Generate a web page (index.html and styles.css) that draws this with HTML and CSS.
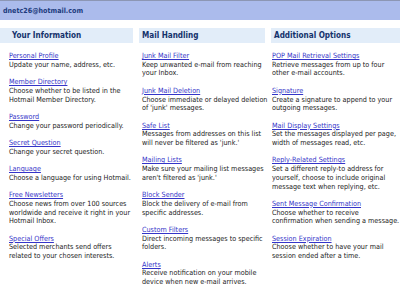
FILE: index.html
```html
<!DOCTYPE html>
<html lang="en">
<head>
	<meta charset="UTF-8">
	<title>Options</title>
	<link rel="stylesheet" href="styles.css">
</head>
<body>
	<div class="topbar">dnetc26@hotmail.com</div>
	<div class="cols">
		<div class="col col-info">
			<div class="head">Your Information</div>
			<ul class="items">
				<li><a href="#">Personal Profile</a><br>Update your name, address, etc.</li>
				<li><a href="#">Member Directory</a><br>Choose whether to be listed in the<br>Hotmail Member Directory.</li>
				<li><a href="#">Password</a><br>Change your password periodically.</li>
				<li><a href="#">Secret Question</a><br>Change your secret question.</li>
				<li><a href="#">Language</a><br>Choose a language for using Hotmail.</li>
				<li><a href="#">Free Newsletters</a><br>Choose news from over 100 sources<br>worldwide and receive it right in your<br>Hotmail Inbox.</li>
				<li><a href="#">Special Offers</a><br>Selected merchants send offers<br>related to your chosen interests.</li>
			</ul>
		</div>
		<div class="col col-mail">
			<div class="head">Mail Handling</div>
			<ul class="items">
				<li><a href="#">Junk Mail Filter</a><br>Keep unwanted e-mail from reaching<br>your Inbox.</li>
				<li><a href="#">Junk Mail Deletion</a><br>Choose immediate or delayed deletion<br>of 'junk' messages.</li>
				<li><a href="#">Safe List</a><br>Messages from addresses on this list<br>will never be filtered as 'junk.'</li>
				<li><a href="#">Mailing Lists</a><br>Make sure your mailing list messages<br>aren't filtered as 'junk.'</li>
				<li><a href="#">Block Sender</a><br>Block the delivery of e-mail from<br>specific addresses.</li>
				<li><a href="#">Custom Filters</a><br>Direct incoming messages to specific<br>folders.</li>
				<li><a href="#">Alerts</a><br>Receive notification on your mobile<br>device when new e-mail arrives.</li>
			</ul>
		</div>
		<div class="col col-extra">
			<div class="head">Additional Options</div>
			<ul class="items">
				<li><a href="#">POP Mail Retrieval Settings</a><br>Retrieve messages from up to four<br>other e-mail accounts.</li>
				<li><a href="#">Signature</a><br>Create a signature to append to your<br>outgoing messages.</li>
				<li><a href="#">Mail Display Settings</a><br>Set the messages displayed per page,<br>width of messages read, etc.</li>
				<li><a href="#">Reply-Related Settings</a><br>Set a different reply-to address for<br>yourself, choose to include original<br>message text when replying, etc.</li>
				<li><a href="#">Sent Message Confirmation</a><br>Choose whether to receive<br>confirmation when sending a message.</li>
				<li><a href="#">Session Expiration</a><br>Choose whether to have your mail<br>session ended after a time.</li>
			</ul>
		</div>
	</div>
</body>
</html>
```
FILE: styles.css
```css
body {
	margin: 0;
	background: #fff;
	font-family: "DejaVu Sans Condensed", "DejaVu Sans", sans-serif;
	color: #222;
}
.topbar {
	height: 19px;
	line-height: 19px;
	padding-left: 3px;
	border-top: 1px solid #8c96b4;
	background: #abbbec;
	font-size: 7.1px;
	font-weight: bold;
	color: #1c3a7c;
}
.cols {
	display: grid;
	grid-template-columns: 133px 126px 129px;
	column-gap: 6px;
	margin-top: 8px;
}
.head {
	height: 15px;
	line-height: 15px;
	background: #e2edf9;
	font-size: 8.1px;
	font-weight: bold;
	color: #14326c;
}
.col-info .head {
	padding-left: 12px;
}
.col-mail .head {
	padding-left: 3px;
}
.col-extra .head {
	padding-left: 3px;
}
.items {
	list-style: none;
	margin: 0;
	padding: 9px 0 0 0;
	font-size: 7.2px;
	line-height: 8.7px;
}
.col-info .items {
	padding-left: 9px;
}
.col-mail .items {
	padding-left: 3px;
}
.col-extra .items {
	padding-left: 1px;
}
.items li {
	margin-bottom: 8.7px;
	white-space: nowrap;
}
.items a {
	color: #3434c8;
}
```
